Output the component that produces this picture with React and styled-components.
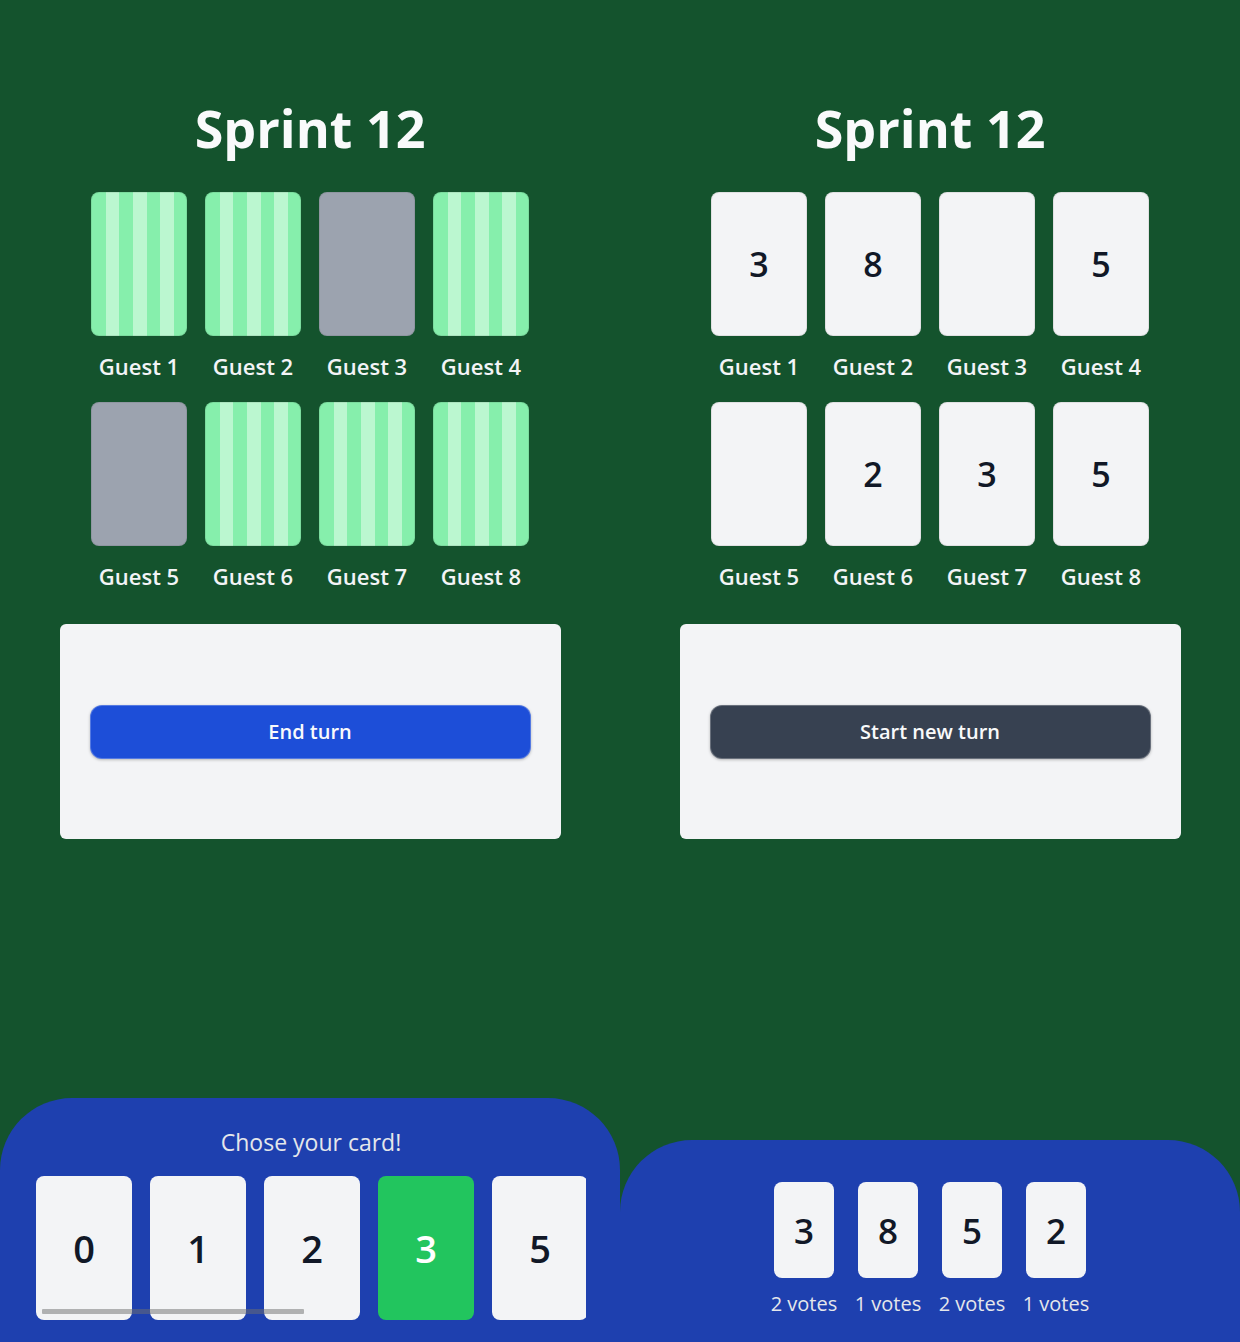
import React from "react";
import styled, { createGlobalStyle, css } from "styled-components";

const GlobalStyle = createGlobalStyle`
  html, body {
    margin: 0;
    padding: 0;
    background: #14532d;
  }
  body {
    font-family: "Open Sans", "Noto Sans", sans-serif;
  }
  * {
    box-sizing: border-box;
  }
`;

const tables = [
  {
    revealed: false,
    action: "End turn",
    variant: "primary",
    seats: [
      { name: "Guest 1", vote: "3" },
      { name: "Guest 2", vote: "8" },
      { name: "Guest 3", vote: null },
      { name: "Guest 4", vote: "5" },
      { name: "Guest 5", vote: null },
      { name: "Guest 6", vote: "2" },
      { name: "Guest 7", vote: "3" },
      { name: "Guest 8", vote: "5" },
    ],
  },
  {
    revealed: true,
    action: "Start new turn",
    variant: "dark",
    seats: [
      { name: "Guest 1", vote: "3" },
      { name: "Guest 2", vote: "8" },
      { name: "Guest 3", vote: null },
      { name: "Guest 4", vote: "5" },
      { name: "Guest 5", vote: null },
      { name: "Guest 6", vote: "2" },
      { name: "Guest 7", vote: "3" },
      { name: "Guest 8", vote: "5" },
    ],
  },
];

const deck = ["0", "1", "2", "3", "5", "8", "13", "21", "34", "?"];
const selected = "3";

const results = [
  { value: "3", votes: 2 },
  { value: "8", votes: 1 },
  { value: "5", votes: 2 },
  { value: "2", votes: 1 },
];

const Table = ({ table }) => (
  <Column>
    <Title>Sprint 12</Title>
    <Seats>
      {table.seats.map((seat) => (
        <Seat key={seat.name}>
          {table.revealed ? (
            <SeatCard $face="open">{seat.vote}</SeatCard>
          ) : (
            <SeatCard $face={seat.vote ? "back" : "empty"} />
          )}
          <SeatName>{seat.name}</SeatName>
        </Seat>
      ))}
    </Seats>
    <ActionBox>
      <ActionButton type="button" $variant={table.variant}>
        {table.action}
      </ActionButton>
    </ActionBox>
  </Column>
);

const App = () => (
  <>
    <GlobalStyle />
    <Page>
      <Board>
        {tables.map((table, i) => (
          <Table key={i} table={table} />
        ))}
      </Board>
      <BottomBar>
        <HandPanel>
          <HandTitle>Chose your card!</HandTitle>
          <HandScroll>
            <HandRow>
              {deck.map((value) => (
                <HandCard key={value} $active={value === selected}>
                  {value}
                </HandCard>
              ))}
            </HandRow>
            <ScrollThumb />
          </HandScroll>
        </HandPanel>
        <ResultPanel>
          <Results>
            {results.map((r) => (
              <Result key={r.value}>
                <ResultCard>{r.value}</ResultCard>
                <ResultVotes>{r.votes} votes</ResultVotes>
              </Result>
            ))}
          </Results>
        </ResultPanel>
      </BottomBar>
    </Page>
  </>
);

const Page = styled.div`
  display: flex;
  flex-direction: column;
  min-height: 100vh;
  background: #14532d;
`;

// 두 개의 테이블
const Board = styled.div`
  display: grid;
  grid-template-columns: 620px 620px;
`;

const Column = styled.div`
  display: flex;
  flex-direction: column;
  align-items: center;
  padding-top: 102px;
`;

const Title = styled.h1`
  margin: 0 0 38px;
  font-size: 52px;
  line-height: 52px;
  font-weight: 700;
  color: #f9fafb;
`;

const Seats = styled.div`
  display: grid;
  grid-template-columns: repeat(4, 96px);
  column-gap: 18px;
  row-gap: 20px;
`;

const Seat = styled.div`
  display: flex;
  flex-direction: column;
  align-items: center;
`;

const faces = {
  back: css`
    background: repeating-linear-gradient(
      90deg,
      #86efac 0 13.7px,
      #bbf7d0 13.7px 27.4px
    );
  `,
  empty: css`
    background: #9ca3af;
  `,
  open: css`
    background: #f3f4f6;
  `,
};

const SeatCard = styled.div`
  display: flex;
  align-items: center;
  justify-content: center;
  width: 96px;
  height: 144px;
  border-radius: 8px;
  border: 1px solid rgba(0, 0, 0, 0.08);
  font-size: 34px;
  font-weight: 600;
  color: #111827;
  ${({ $face }) => faces[$face]}
`;

const SeatName = styled.div`
  margin-top: 16px;
  margin-bottom: 2px;
  font-size: 22px;
  line-height: 28px;
  font-weight: 600;
  color: #f3f4f6;
`;

const ActionBox = styled.div`
  display: flex;
  align-items: center;
  width: 501px;
  height: 215px;
  margin-top: 32px;
  padding: 0 30px;
  background: #f3f4f6;
  border-radius: 6px;
`;

const ActionButton = styled.button`
  width: 100%;
  height: 54px;
  border: 1px solid rgba(255, 255, 255, 0.25);
  border-radius: 12px;
  font-family: inherit;
  font-size: 20px;
  font-weight: 600;
  color: #f9fafb;
  background: ${({ $variant }) => ($variant === "primary" ? "#1d4ed8" : "#374151")};
  box-shadow: 0 1px 3px rgba(0, 0, 0, 0.25);
  cursor: pointer;
`;

// 하단 패널
const BottomBar = styled.div`
  display: grid;
  grid-template-columns: 620px 620px;
  align-items: end;
  margin-top: auto;
`;

const HandPanel = styled.div`
  display: flex;
  flex-direction: column;
  align-items: center;
  height: 244px;
  padding: 30px 34px 22px 36px;
  background: #1e40af;
  border-radius: 72px 72px 0 0;
`;

const HandTitle = styled.div`
  font-size: 23px;
  line-height: 28px;
  font-weight: 500;
  color: #e5e7eb;
  margin-bottom: 20px;
`;

const HandScroll = styled.div`
  position: relative;
  width: 100%;
`;

const HandRow = styled.div`
  display: flex;
  gap: 18px;
  overflow-x: auto;
  scrollbar-width: none;
`;

const HandCard = styled.div`
  flex-shrink: 0;
  display: flex;
  align-items: center;
  justify-content: center;
  width: 96px;
  height: 144px;
  border-radius: 8px;
  font-size: 38px;
  font-weight: 600;
  background: ${({ $active }) => ($active ? "#22c55e" : "#f3f4f6")};
  color: ${({ $active }) => ($active ? "#ffffff" : "#111827")};
`;

const ScrollThumb = styled.div`
  position: absolute;
  left: 6px;
  bottom: 6px;
  width: 262px;
  height: 5px;
  border-radius: 1px;
  background: rgba(110, 110, 110, 0.5);
`;

const ResultPanel = styled.div`
  display: flex;
  justify-content: center;
  height: 202px;
  padding-top: 42px;
  background: #1e40af;
  border-radius: 72px 72px 0 0;
`;

const Results = styled.div`
  display: flex;
  gap: 14px;
`;

const Result = styled.div`
  display: flex;
  flex-direction: column;
  align-items: center;
  width: 70px;
`;

const ResultCard = styled.div`
  display: flex;
  align-items: center;
  justify-content: center;
  width: 60px;
  height: 96px;
  border-radius: 8px;
  background: #f3f4f6;
  font-size: 35px;
  font-weight: 600;
  color: #111827;
`;

const ResultVotes = styled.div`
  margin-top: 12px;
  font-size: 20px;
  line-height: 28px;
  font-weight: 500;
  color: #e5e7eb;
  white-space: nowrap;
`;

export default App;
